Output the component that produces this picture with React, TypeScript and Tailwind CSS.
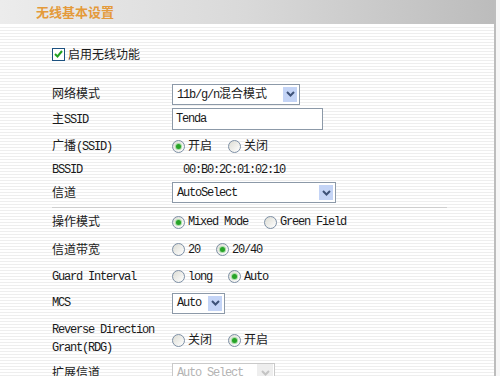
const CJK = /([\u3000-\u9fff\uff00-\uffef]+)/;

// latin runs keep the narrow mono face, CJK runs go to Noto at 12px
function Mix({ text }: { text: string }) {
  return (
    <>
      {text.split(CJK).map((s, i) =>
        i % 2 ? (
          <span key={i} className="font-['Noto_Sans_CJK_SC',sans-serif] text-[12px] tracking-normal">
            {s}
          </span>
        ) : (
          s
        ),
      )}
    </>
  );
}

function Radio({ checked, label }: { checked?: boolean; label: string }) {
  return (
    <span className="flex items-center gap-[3px]">
      <span className="flex h-[13px] w-[13px] items-center justify-center rounded-full border border-[#7d8fa5] bg-[linear-gradient(135deg,#dcdcd4,#ffffff)]">
        {checked && <span className="h-[5px] w-[5px] rounded-full bg-[#27a327] shadow-[0_0_0_1px_#a6dca6]" />}
      </span>
      <span className="leading-none">
        <Mix text={label} />
      </span>
    </span>
  );
}

function Chevron({ color }: { color: string }) {
  return (
    <svg width="9" height="6" viewBox="0 0 9 6">
      <path d="M1 1l3.5 3.5L8 1" fill="none" stroke={color} strokeWidth="2" />
    </svg>
  );
}

function Select({ value, className, disabled }: { value: string; className: string; disabled?: boolean }) {
  return (
    <div
      className={`flex items-center border bg-white pl-[4px] pr-[1px] ${
        disabled ? 'border-[#c9c9c9] text-[#b4b4b4]' : 'border-[#8c99a8]'
      } ${className}`}
    >
      <span className="flex-1 leading-none">
        <Mix text={value} />
      </span>
      <span
        className={`flex h-[17px] w-[16px] items-center justify-center ${
          disabled ? 'bg-[#eeeeee]' : 'bg-[#c4d4f6] border border-white'
        }`}
      >
        <Chevron color={disabled ? '#c4c4c4' : '#3e5278'} />
      </span>
    </div>
  );
}

function Row({ label, h, children }: { label: string; h: string; children: React.ReactNode }) {
  return (
    <div className={`flex items-center ${h}`}>
      <div className="w-[120px] leading-none">
        <Mix text={label} />
      </div>
      <div className="flex items-center gap-[16px]">{children}</div>
    </div>
  );
}

export default function App() {
  return (
    <div className="flex h-[376px] w-[500px] overflow-hidden bg-[#f7f7f7] font-['Liberation_Mono','Noto_Sans_CJK_SC',monospace] text-[12px] tracking-[-1.2px] text-[#1a1a1a]">
      <div className="flex w-[496px] flex-col border-r-2 border-[#bdbdbd]">
        <div className="flex h-[24px] shrink-0 items-center bg-[linear-gradient(to_right,#ececec,#d9d9d9_50%,#bcbcbc)] pl-[36px]">
          <span className="font-['Noto_Sans_CJK_SC',sans-serif] text-[13px] font-bold tracking-normal text-[#e49a3b]">
            无线基本设置
          </span>
        </div>

        <div className="flex-1 border-t border-white bg-[image:repeating-linear-gradient(to_bottom,#ffffff_0px,#ffffff_2px,#eeeeee_2px,#eeeeee_3px)] pl-[52px]">
          <div className="mt-[18px] flex h-[22px] items-center gap-[3px]">
            <span className="flex h-[13px] w-[13px] items-center justify-center border border-[#1c5180] bg-white">
              <svg width="9" height="8" viewBox="0 0 9 8">
                <path d="M1 4l2.5 2.5L8 1" fill="none" stroke="#21a121" strokeWidth="2" />
              </svg>
            </span>
            <span className="font-['Noto_Sans_CJK_SC',sans-serif] text-[12px] tracking-normal">启用无线功能</span>
          </div>

          <div className="h-[17px]" />
          <Row label="网络模式" h="h-[24px]">
            <Select value="11b/g/n混合模式" className="h-[21px] w-[128px]" />
          </Row>
          <Row label="主SSID" h="h-[26px]">
            <div className="flex h-[22px] w-[151px] items-center border border-[#8c99a8] bg-white pl-[3px] leading-none">
              Tenda
            </div>
          </Row>
          <Row label="广播(SSID)" h="h-[28px]">
            <Radio checked label="开启" />
            <Radio label="关闭" />
          </Row>
          <Row label="BSSID" h="h-[19px]">
            <span className="pl-[11px]">00:B0:2C:01:02:10</span>
          </Row>
          <Row label="信道" h="h-[27px]">
            <Select value="AutoSelect" className="h-[21px] w-[164px]" />
          </Row>

          <div className="mt-[1px] w-[395px] border-t border-[#cfcfcf]" />

          <Row label="操作模式" h="h-[28px]">
            <Radio checked label="Mixed Mode" />
            <Radio label="Green Field" />
          </Row>
          <Row label="信道带宽" h="h-[27px]">
            <Radio label="20" />
            <Radio checked label="20/40" />
          </Row>
          <Row label="Guard Interval" h="h-[27px]">
            <Radio label="long" />
            <Radio checked label="Auto" />
          </Row>
          <Row label="MCS" h="h-[26px]">
            <Select value="Auto" className="h-[21px] w-[53px]" />
          </Row>

          <div className="flex h-[41px] items-start">
            <div className="w-[120px] pt-[5px] leading-[18px]">
              Reverse Direction
              <br />
              Grant(RDG)
            </div>
            <div className="mt-[17px] flex items-center gap-[16px]">
              <Radio label="关闭" />
              <Radio checked label="开启" />
            </div>
          </div>

          <div className="flex h-[30px] items-start">
            <div className="w-[120px] pt-[9px] leading-none">
              <Mix text="扩展信道" />
            </div>
            <Select value="Auto Select" disabled className="mt-[6px] h-[19px] w-[103px]" />
          </div>
        </div>
      </div>
    </div>
  );
}
